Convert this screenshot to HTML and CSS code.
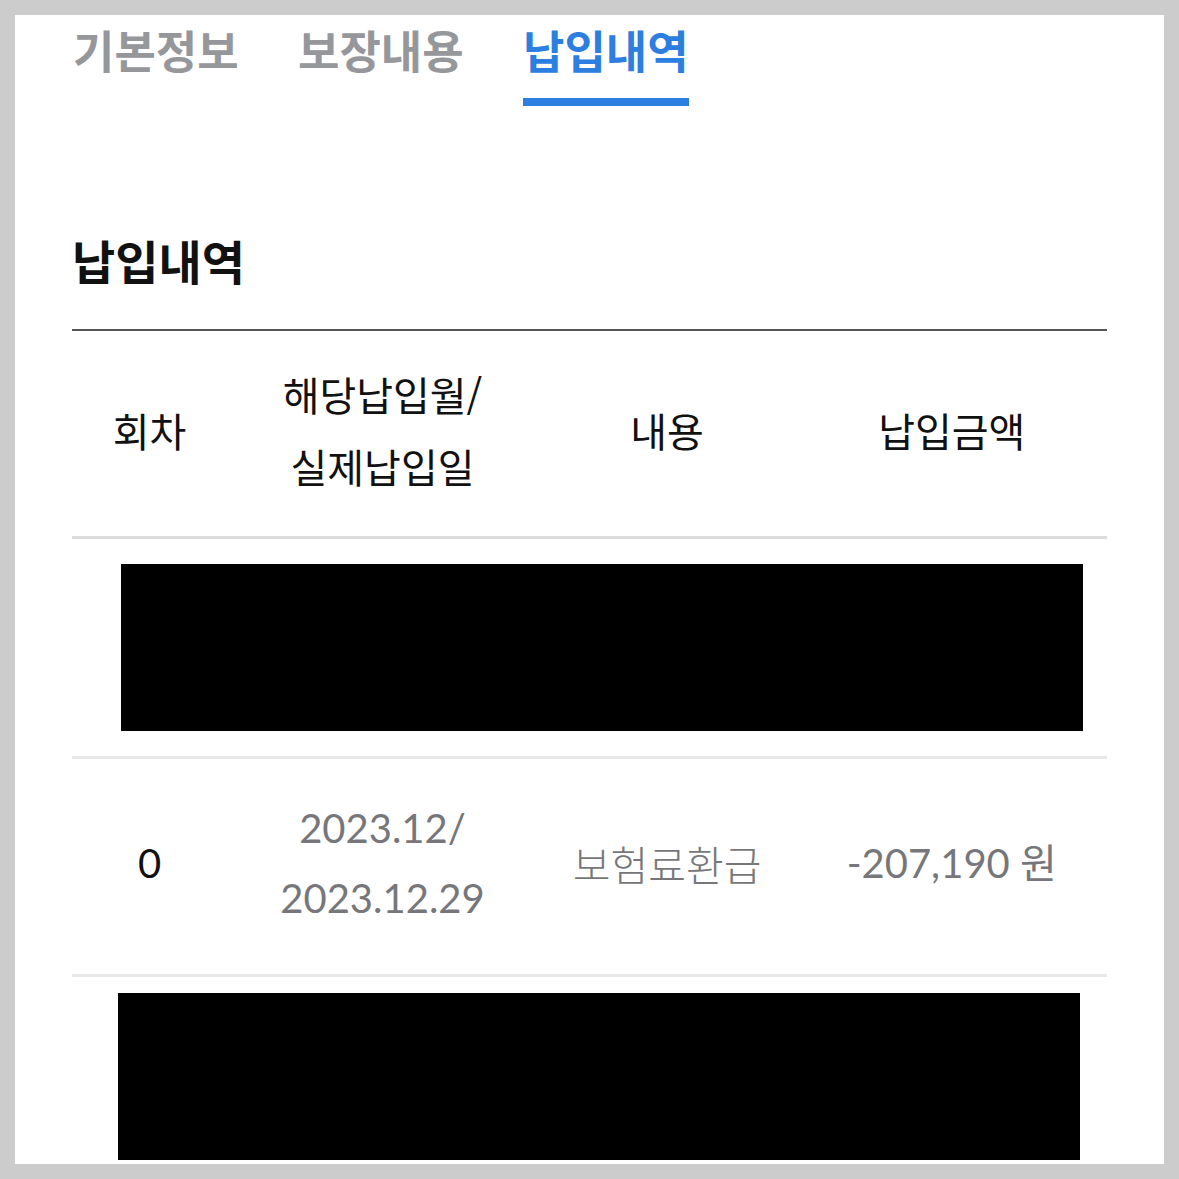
FILE: index.html
```html
<!DOCTYPE html>
<html lang="ko">
<head>
    <meta charset="UTF-8">
    <meta name="viewport" content="width=device-width, initial-scale=1.0">
    <title>납입내역</title>
    <link rel="stylesheet" href="styles.css">
</head>
<body>
    <div class="page">
        <ul class="tabs">
            <li><a href="#">기본정보</a></li>
            <li><a href="#">보장내용</a></li>
            <li class="active"><a href="#">납입내역</a></li>
        </ul>

        <h2 class="section-title">납입내역</h2>

        <table class="pay-table">
            <colgroup>
                <col class="col-no">
                <col class="col-month">
                <col class="col-desc">
                <col class="col-amount">
            </colgroup>
            <thead>
                <tr>
                    <th>회차</th>
                    <th>해당납입월/<br>실제납입일</th>
                    <th>내용</th>
                    <th>납입금액</th>
                </tr>
            </thead>
            <tbody>
                <tr class="hidden-row">
                    <td colspan="4"><div class="redacted"></div></td>
                </tr>
                <tr class="data-row">
                    <td class="num">0</td>
                    <td class="num muted">2023.12/<br>2023.12.29</td>
                    <td class="desc">보험료환급</td>
                    <td class="num muted">-207,190 원</td>
                </tr>
                <tr class="hidden-row last">
                    <td colspan="4"><div class="redacted"></div></td>
                </tr>
            </tbody>
        </table>
    </div>
</body>
</html>
```

FILE: styles.css
```css
/* General Reset */
* {
    margin: 0;
    padding: 0;
    box-sizing: border-box;
}

body {
    background-color: #cccccc;
    padding: 15px;
    font-family: 'Noto Sans CJK KR', 'Noto Sans', sans-serif;
    color: #111;
}

.page {
    background-color: white;
    height: 1149px;
    overflow: hidden;
    padding: 7px 57px 0 57px;
}

/* Tabs */
.tabs {
    list-style: none;
    display: flex;
    gap: 59px;
    padding-left: 1px;
}

.tabs li {
    width: 166px;
    padding-bottom: 20px;
    border-bottom: 8px solid transparent;
    white-space: nowrap;
}

.tabs li a {
    display: block;
    color: #96979b;
    text-decoration: none;
    font-size: 45px;
    font-weight: 700;
    line-height: 56px;
}

.tabs li.active {
    border-bottom-color: #2c7fe0;
}

.tabs li.active a {
    color: #2c7fe0;
}

/* Section title */
.section-title {
    margin-top: 124px;
    font-size: 47px;
    font-weight: 700;
    line-height: 60px;
    color: #111;
}

/* Table */
.pay-table {
    width: 100%;
    margin-top: 39px;
    border-collapse: collapse;
    border-top: 2px solid #555;
    table-layout: fixed;
}

.col-no { width: 15%; }
.col-month { width: 30%; }
.col-desc { width: 25%; }
.col-amount { width: 30%; }

.pay-table th {
    height: 207px;
    padding-bottom: 6px;
    font-size: 40px;
    font-weight: 400;
    line-height: 72px;
    text-align: center;
    color: #111;
    border-bottom: 3px solid #dcdcdc;
}

.pay-table td {
    text-align: center;
    border-bottom: 3px solid #e8e8e8;
}

.data-row td {
    height: 218px;
    padding-bottom: 6px;
}

.pay-table td.num {
    font-family: 'Lato', 'Noto Sans CJK KR', sans-serif;
    font-size: 40px;
    line-height: 70px;
    color: #111;
}

.pay-table td.muted {
    color: #77777b;
}

.pay-table td.desc {
    font-size: 41px;
    font-weight: 300;
    color: #77777b;
}

.hidden-row td {
    padding: 25px 0 25px 0;
}

.hidden-row.last td {
    padding-top: 16px;
    vertical-align: top;
    border-bottom: none;
}

.redacted {
    background-color: black;
    height: 167px;
    width: 962px;
    margin-left: 49px;
}

.hidden-row.last .redacted {
    margin-left: 46px;
}
```
